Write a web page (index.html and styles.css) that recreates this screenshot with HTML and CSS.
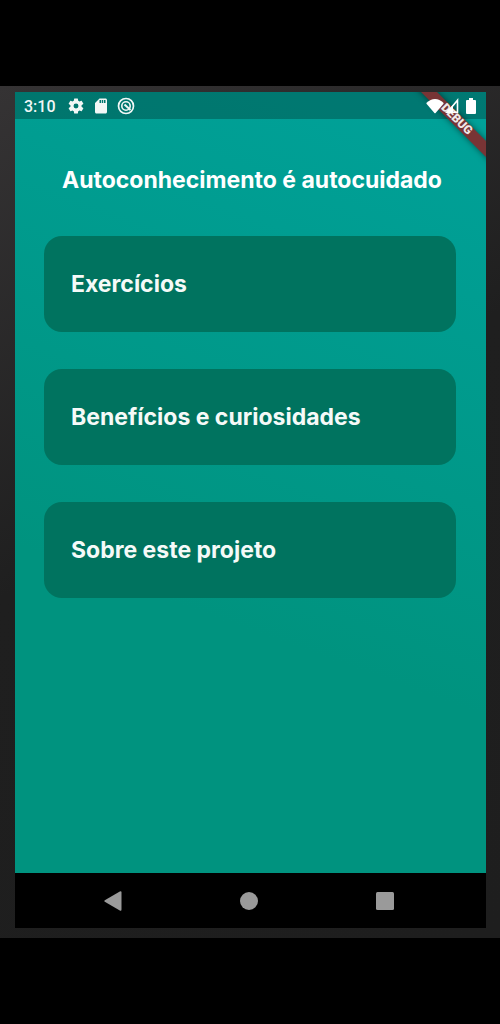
FILE: index.html
```html
<!DOCTYPE html>
<html lang="pt-BR">
<head>
<meta charset="utf-8">
<meta name="viewport" content="width=device-width, initial-scale=1">
<title>Autoconhecimento é autocuidado</title>
<link rel="stylesheet" href="styles.css">
</head>
<body>
<div class="device">
  <div class="screen">
    <header class="status">
      <time class="clock">3:10</time>
      <div class="status-left">
        <svg width="18" height="18" viewBox="0 0 24 24" fill="currentColor" aria-hidden="true"><path d="M19.400 13a7.500 7.500 0 0 0 0-2l2.200-1.600a.5.5 0 0 0 .1-.7l-2-3.400a.5.5 0 0 0-.6-.2l-2.500 1a7.300 7.300 0 0 0-1.700-1L14.500 2.400a.5.5 0 0 0-.5-.4h-4a.5.5 0 0 0-.5.4l-.4 2.700a7.300 7.300 0 0 0-1.700 1l-2.500-1a.5.5 0 0 0-.6.2l-2 3.400a.5.5 0 0 0 .1.700L4.600 11a7.500 7.500 0 0 0 0 2l-2.200 1.600a.5.5 0 0 0-.1.700l2 3.400c.1.200.4.300.6.200l2.500-1a7.300 7.300 0 0 0 1.700 1l.4 2.700c0 .2.200.4.500.4h4c.300 0 .5-.2.500-.4l.4-2.700a7.300 7.300 0 0 0 1.700-1l2.500 1c.2.100.5 0 .6-.2l2-3.400a.5.5 0 0 0-.1-.7zM12 15.300a3.300 3.300 0 1 1 0-6.600 3.300 3.300 0 0 1 0 6.600z"/></svg>
        <svg width="18" height="18" viewBox="0 0 24 24" fill="currentColor" aria-hidden="true"><path d="M18 2h-8L4 8v12c0 1.100.9 2 2 2h12c1.100 0 2-.9 2-2V4c0-1.100-.9-2-2-2zm-6 6h-2V4h2zm3 0h-2V4h2zm3 0h-2V4h2z"/></svg>
        <svg width="18" height="18" viewBox="0 0 18 18" fill="none" stroke="currentColor" aria-hidden="true"><circle cx="9" cy="9" r="7.500" stroke-width="1.700"/><circle cx="9" cy="9" r="4.200" stroke-width="1.600"/><path d="M7.500 7.500l6 5.500" stroke-width="2"/></svg>
      </div>
      <div class="status-right">
        <svg width="18" height="16" viewBox="0 0 18 16" fill="currentColor" aria-hidden="true"><path d="M.6 4.800C5.500-.4 12.500-.4 17.400 4.800q.4.700-.1 1.300L9.600 15q-.6.600-1.200 0L.7 6.100Q.2 5.500.6 4.800z"/></svg>
        <svg width="14" height="16" viewBox="0 0 14 16" aria-hidden="true"><path d="M12.500 2.200v12H2.500z" fill="none" stroke="currentColor" stroke-width="1.600"/><path d="M8 7v8H0z" fill="currentColor"/></svg>
        <svg width="10" height="16" viewBox="0 0 10 16" fill="currentColor" aria-hidden="true"><path d="M3 0h4v2h2q1 0 1 1v12q0 1-1 1H1q-1 0-1-1V3q0-1 1-1h2z"/></svg>
      </div>
    </header>
    <main class="content">
      <h1 class="title">Autoconhecimento é autocuidado</h1>
      <nav class="menu">
        <button class="card" type="button">Exercícios</button>
        <button class="card" type="button">Benefícios e curiosidades</button>
        <button class="card" type="button">Sobre este projeto</button>
      </nav>
    </main>
    <svg class="ribbon" width="80" height="80" viewBox="0 0 80 80" aria-hidden="true">
      <path class="ribbon-band" d="M7-8l97 97v-16L23-8z"/>
      <text class="ribbon-text" transform="translate(51 27) rotate(45)" text-anchor="middle" y="4">DEBUG</text>
    </svg>
    <footer class="navbar">
      <button class="nav-button" type="button" aria-label="Voltar"><svg width="20" height="22" viewBox="0 0 20 22" fill="currentColor"><path d="M1.800 10.200L16.800 1.600q1.700-.8 1.700 1v16.800q0 1.800-1.700 1L1.800 11.800q-1.200-.8 0-1.600z"/></svg></button>
      <button class="nav-button" type="button" aria-label="Início"><svg width="20" height="20" viewBox="0 0 20 20" fill="currentColor"><circle cx="10" cy="10" r="9"/></svg></button>
      <button class="nav-button" type="button" aria-label="Recentes"><svg width="20" height="20" viewBox="0 0 20 20" fill="currentColor"><rect x="1" y="1" width="18" height="18" rx="1.500"/></svg></button>
    </footer>
  </div>
</div>
</body>
</html>
```
FILE: styles.css
```css
* {
  box-sizing: border-box;
}

body {
  margin: 0;
  min-height: 100vh;
  padding: 86px 0;
  display: flex;
  background: #000;
  font-family: Inter, Roboto, sans-serif;
}

.device {
  flex: 1;
  display: flex;
  padding: 6px 14px 10px 15px;
  background: linear-gradient(150deg, #353334 0%, #1f1f1f 45%, #1e1e1e 100%);
}

.screen {
  flex: 1;
  position: relative;
  display: flex;
  flex-direction: column;
  overflow: hidden;
  background: linear-gradient(200deg, #00a29a 0%, #00937f 62%);
}

.status {
  height: 27px;
  padding: 0 10px 0 9px;
  display: flex;
  align-items: center;
  background: rgba(0, 0, 0, 0.25);
  color: #f2f7f6;
}

.clock {
  font: 500 16px/27px Roboto, sans-serif;
  padding-top: 2px;
}

.status-left {
  display: flex;
  gap: 7px;
  margin-left: 11px;
}

.status-right {
  position: relative;
  z-index: 2;
  display: flex;
  gap: 7px;
  margin-left: auto;
  color: #fff;
}

.status-right svg:first-child {
  margin-right: -6px;
}

.content {
  flex: 1;
  padding: 45px 30px 32px 29px;
}

.title {
  margin: 0 0 39px;
  padding-left: 4px;
  color: #fff;
  font-size: 23px;
  font-weight: 700;
  line-height: 33px;
  text-align: center;
}

.menu {
  display: flex;
  flex-direction: column;
  gap: 37px;
}

.card {
  min-height: 96px;
  padding: 0 27px;
  border: 0;
  border-radius: 18px;
  background: #00735f;
  color: #f5faf8;
  font: 700 23px/32px Inter, Roboto, sans-serif;
  text-align: left;
  cursor: pointer;
}

.ribbon {
  position: absolute;
  top: 0;
  right: 0;
  z-index: 1;
}

.ribbon-band {
  fill: #783435;
  filter: drop-shadow(0 0 3px rgba(0, 0, 0, 0.5));
}

.ribbon-text {
  fill: #f0e8e8;
  font: 900 12px Roboto, sans-serif;
}

.navbar {
  height: 55px;
  padding: 0 33px 0 30px;
  display: grid;
  grid-template-columns: repeat(3, 1fr);
  background: #000;
}

.nav-button {
  display: grid;
  place-items: center;
  padding: 0;
  border: 0;
  background: none;
  color: #9a9a9a;
  cursor: pointer;
}
```
